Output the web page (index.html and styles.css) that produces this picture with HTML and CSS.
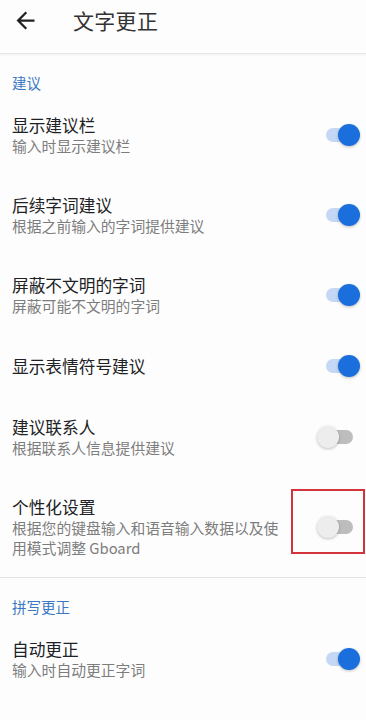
FILE: index.html
```
<!DOCTYPE html>
<html lang="zh-CN">
<head>
<meta charset="utf-8">
<link rel="stylesheet" href="styles.css">
</head>
<body>
<header class="appbar">
  <svg class="back" viewBox="0 0 24 24" width="27" height="27"><path d="M20 11H7.83l5.59-5.59L12 4l-8 8 8 8 1.41-1.41L7.83 13H20v-2z" fill="#222"/></svg>
  <h1 class="title">文字更正</h1>
</header>
<main>
  <div class="section">建议</div>
  <div class="item">
    <div class="text"><div class="t">显示建议栏</div><div class="s">输入时显示建议栏</div></div>
    <div class="switch on"><span class="track"></span><span class="thumb"></span></div>
  </div>
  <div class="item">
    <div class="text"><div class="t">后续字词建议</div><div class="s">根据之前输入的字词提供建议</div></div>
    <div class="switch on"><span class="track"></span><span class="thumb"></span></div>
  </div>
  <div class="item">
    <div class="text"><div class="t">屏蔽不文明的字词</div><div class="s">屏蔽可能不文明的字词</div></div>
    <div class="switch on"><span class="track"></span><span class="thumb"></span></div>
  </div>
  <div class="item single">
    <div class="text"><div class="t">显示表情符号建议</div></div>
    <div class="switch on"><span class="track"></span><span class="thumb"></span></div>
  </div>
  <div class="item">
    <div class="text"><div class="t">建议联系人</div><div class="s">根据联系人信息提供建议</div></div>
    <div class="switch"><span class="track"></span><span class="thumb"></span></div>
  </div>
  <div class="item marked">
    <div class="text"><div class="t">个性化设置</div><div class="s">根据您的键盘输入和语音输入数据以及使用模式调整 Gboard</div></div>
    <div class="switch"><span class="track"></span><span class="thumb"></span></div>
    <span class="mark"></span>
  </div>
  <div class="divider"></div>
  <div class="section">拼写更正</div>
  <div class="item">
    <div class="text"><div class="t">自动更正</div><div class="s">输入时自动更正字词</div></div>
    <div class="switch on"><span class="track"></span><span class="thumb"></span></div>
  </div>
  <div class="item">
    <div class="text"><div class="t">标点后自动插入空格</div><div class="s">在标点符号后自动插入空格</div></div>
    <div class="switch on"><span class="track"></span><span class="thumb"></span></div>
  </div>
</main>
</body>
</html>
```
FILE: styles.css
```
* { box-sizing: border-box; }
html, body { margin: 0; padding: 0; }
body {
  background: #fdfdfd;
  font-family: "Noto Sans CJK SC", "Noto Sans", Roboto, sans-serif;
  width: 366px;
  height: 720px;
  overflow: hidden;
}
.appbar {
  height: 54px;
  display: flex;
  align-items: flex-start;
  padding-top: 6px;
  border-bottom: 1px solid #e8e8e8;
  box-shadow: 0 1px 2px rgba(0,0,0,0.06);
  background: #fdfdfd;
}
.back {
  margin-left: 12px;
  margin-top: 1px;
  display: block;
}
.title {
  margin: 0 0 0 34px;
  font-size: 21px;
  font-weight: 400;
  line-height: 28px;
  color: #333;
  letter-spacing: 0.3px;
}
.section {
  padding: 19px 12px 2px;
  font-size: 14.5px;
  line-height: 20px;
  color: #3b78c2;
}
.item {
  position: relative;
  display: flex;
  align-items: center;
  padding: 19px 5px 19px 12px;
  min-height: 80px;
}
.item.single { min-height: 61px; }
.text { flex: 1; min-width: 0; padding-right: 28px; }
.t {
  font-size: 16.7px;
  line-height: 22px;
  color: #202124;
}
.s {
  font-size: 14.8px;
  line-height: 20px;
  color: #7d7d7d;
}
.switch {
  position: relative;
  width: 44px;
  height: 24px;
  flex: none;
}
.track {
  position: absolute;
  left: 9px;
  top: 5px;
  width: 27px;
  height: 14px;
  border-radius: 7px;
  background: #bdbdbd;
}
.thumb {
  position: absolute;
  left: 0;
  top: 1px;
  width: 22px;
  height: 22px;
  border-radius: 50%;
  background: #ededed;
  box-shadow: 0 1px 3px rgba(0,0,0,0.25);
}
.switch.on .track { background: #c4d8f5; }
.switch.on .thumb { left: 21px; background: #1a6fdc; }
.mark {
  position: absolute;
  left: 291px;
  top: 12px;
  width: 74px;
  height: 65px;
  border: 2px solid #d3343c;
}
.divider {
  height: 1px;
  background: #e2e2e2;
}
```
